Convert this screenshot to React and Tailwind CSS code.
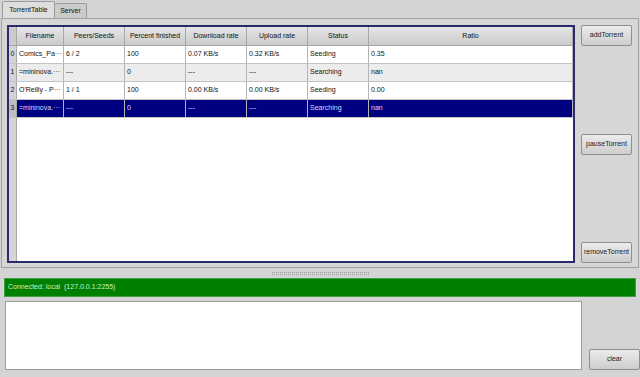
import React from 'react'

const cols = [
  { label: 'Filename', w: 'w-[47px]' },
  { label: 'Peers/Seeds', w: 'w-[61px]' },
  { label: 'Percent finished', w: 'w-[61px]' },
  { label: 'Download rate', w: 'w-[61px]' },
  { label: 'Upload rate', w: 'w-[61px]' },
  { label: 'Status', w: 'w-[61px]' },
  { label: 'Ratio', w: 'flex-1' },
]

const rows = [
  ['Comics_Pa···', '6 / 2', '100', '0.07 KB/s', '0.32 KB/s', 'Seeding', '0.35'],
  ['=mininova.···', '---', '0', '---', '---', 'Searching', 'nan'],
  ["O'Reilly - P···", '1 / 1', '100', '0.00 KB/s', '0.00 KB/s', 'Seeding', '0.00'],
  ['=mininova.···', '---', '0', '---', '---', 'Searching', 'nan'],
]

const Button = ({ children, className = '' }) => (
  <div
    className={`w-[51px] h-[21px] flex items-center justify-center rounded-[2px] border border-[#8f8f8f] bg-gradient-to-b from-[#ececec] to-[#cdcdcd] text-[#222] ${className}`}
  >
    {children}
  </div>
)

const App = () => {
  return (
    <div
      className="w-[640px] h-[377px] bg-[#d4d4d4] flex flex-col overflow-hidden text-[7px] text-[#111]"
      style={{ fontFamily: '"Liberation Sans", Arial, sans-serif' }}
    >
      {/* tabs */}
      <div className="h-[18px] flex items-end pl-[2px]">
        <div className="w-[53px] h-[17px] border border-b-0 border-[#9a9a9a] bg-[#dedede] rounded-t-[2px] flex items-center justify-center">
          TorrentTable
        </div>
        <div className="w-[32px] h-[15px] border border-b-0 border-l-0 border-[#9a9a9a] bg-[#cbcbcb] rounded-t-[2px] flex items-center justify-center">
          Server
        </div>
      </div>

      {/* tab pane */}
      <div className="mx-[1px] h-[250px] border border-[#a3a3a3] bg-[#d6d6d6] flex pl-[5px] pt-[6px] pb-[4px]">
        <div className="w-[568px] h-[238px] border-2 border-[#2b2b6b] bg-white flex flex-col">
          <div className="flex h-[19px] border-b border-[#a8a8a8]">
            <div className="w-[8px] bg-[#c9c9cf] border-r border-[#a8a8a8]" />
            {cols.map((c) => (
              <div
                key={c.label}
                className={`${c.w} shrink-0 bg-gradient-to-b from-[#e6e6e6] to-[#cbcbcb] border-r border-[#a8a8a8] flex items-center justify-center`}
              >
                {c.label}
              </div>
            ))}
          </div>
          {rows.map((r, i) => {
            const selected = i === 3
            const bg = selected ? 'bg-[#000080] text-[#d8d8ff]' : i % 2 ? 'bg-[#ececec]' : 'bg-white'
            return (
              <div key={i} className="flex h-[18px] border-b border-[#c4c4c4]">
                <div
                  className={`w-[8px] border-r border-[#a8a8a8] flex items-center justify-center ${
                    selected ? 'bg-[#bdbdc2]' : 'bg-[#d4d4d8]'
                  }`}
                >
                  {i}
                </div>
                {r.map((cell, j) => (
                  <div
                    key={j}
                    className={`${cols[j].w} shrink-0 ${bg} border-r border-[#b4b4b4] flex items-center pl-[2px] overflow-hidden whitespace-nowrap`}
                  >
                    {cell}
                  </div>
                ))}
              </div>
            )
          })}
          <div className="flex-1 flex">
            <div className="w-[8px] bg-[#d4d4d8] border-r border-[#a8a8a8]" />
          </div>
        </div>
        <div className="ml-[6px] flex flex-col justify-between h-[238px]">
          <Button>addTorrent</Button>
          <Button>pauseTorrent</Button>
          <Button>removeTorrent</Button>
        </div>
      </div>

      {/* splitter */}
      <div className="h-[10px] flex items-center justify-center">
        <div className="w-[97px] h-[3px] border-t border-b border-dotted border-[#a0a0a0]" />
      </div>

      {/* status */}
      <div className="mx-[4px] h-[19px] bg-[#008000] border border-[#3fa03f] text-[#c8f0c8] flex items-center pl-[3px]">
        Connected: local&nbsp;&nbsp;(127.0.0.1:2255)
      </div>

      {/* log */}
      <div className="flex items-end pl-[5px] pt-[4px]">
        <div className="w-[577px] h-[69px] bg-white border border-[#9c9c9c]" />
        <Button className="ml-[7px] w-[45px] h-[21px]">clear</Button>
      </div>
    </div>
  )
}

export default App
